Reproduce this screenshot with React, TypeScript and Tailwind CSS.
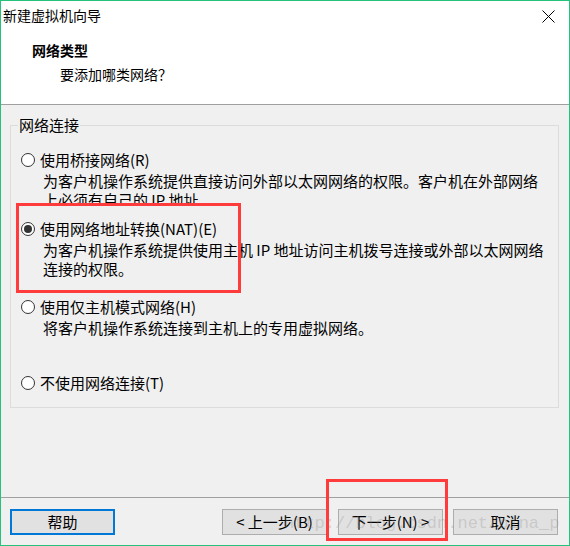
type Option = {
  label: string;
  lines: string[];
  checked?: boolean;
  className: string;
  descClassName?: string;
};

const options: Option[] = [
  {
    label: "使用桥接网络(R)",
    lines: ["为客户机操作系统提供直接访问外部以太网网络的权限。客户机在外部网络", "上必须有自己的 IP 地址。"],
    className: "mt-[15px]",
    descClassName: "h-[32px] overflow-hidden",
  },
  {
    label: "使用网络地址转换(NAT)(E)",
    lines: ["为客户机操作系统提供使用主机 IP 地址访问主机拨号连接或外部以太网网络", "连接的权限。"],
    checked: true,
    className: "mt-[16px]",
  },
  {
    label: "使用仅主机模式网络(H)",
    lines: ["将客户机操作系统连接到主机上的专用虚拟网络。"],
    className: "mt-[19px]",
  },
  {
    label: "不使用网络连接(T)",
    lines: [],
    className: "mt-[36px]",
  },
];

function Radio({ checked }: { checked?: boolean }) {
  return (
    <span className="flex h-[14px] w-[14px] shrink-0 items-center justify-center rounded-full border border-[#333333] bg-white">
      {checked && <span className="h-[8px] w-[8px] rounded-full bg-[#333333]" />}
    </span>
  );
}

function Button({ children, focused }: { children: React.ReactNode; focused?: boolean }) {
  return (
    <div
      className={
        focused
          ? "flex h-[26px] w-[105px] items-center justify-center border-2 border-[#0078d7] bg-[#e1e1e1] text-[15px] leading-[20px]"
          : "flex h-[26px] w-[105px] items-center justify-center border border-[#adadad] bg-[#e1e1e1] text-[15px] leading-[20px]"
      }
    >
      {children}
    </div>
  );
}

export default function App() {
  return (
    <div className="relative flex h-[546px] w-[570px] flex-col overflow-hidden border border-[#25c27a] bg-[#f0f0f0] font-['Noto_Sans_CJK_SC',sans-serif] text-black">
      <header className="h-[104px] shrink-0 border-b border-[#a0a0a0] bg-white">
        <div className="flex items-center justify-between pl-[2px] pr-[14px] pt-[4px]">
          <span className="text-[14px] leading-[20px]">新建虚拟机向导</span>
          <svg width="13" height="13" viewBox="0 0 13 13" className="mt-[2px]">
            <path d="M0.5 0.5 L12.5 12.5 M12.5 0.5 L0.5 12.5" stroke="#000" strokeWidth="1" />
          </svg>
        </div>
        <div className="mt-[15px] pl-[31px] text-[14px] font-bold leading-[20px]">网络类型</div>
        <div className="mt-[4px] pl-[59px] text-[14px] leading-[20px]">要添加哪类网络？</div>
      </header>

      <div className="flex flex-1 flex-col">
        <fieldset className="ml-[9px] mr-[10px] mt-[10px] border border-[#dcdcdc] pb-[14px]">
          <legend className="ml-[7px] px-[1px] text-[15px] leading-[20px]">网络连接</legend>
          {options.map((opt) => (
            <div key={opt.label} className={opt.className}>
              <div className="flex h-[20px] items-center pl-[10px]">
                <Radio checked={opt.checked} />
                <span className="ml-[5px] text-[15px] leading-[20px]">{opt.label}</span>
              </div>
              {opt.lines.length > 0 && (
                <div className={`mt-[1px] pl-[32px] text-[15px] leading-[19px] ${opt.descClassName ?? ""}`}>
                  {opt.lines.map((line) => (
                    <div key={line} className="whitespace-nowrap">
                      {line}
                    </div>
                  ))}
                </div>
              )}
            </div>
          ))}
        </fieldset>

        <footer className="mt-auto flex border-t border-[#a0a0a0] pb-[10px] pl-[9px] pr-[11px] pt-[11px]">
          <Button focused>帮助</Button>
          <div className="flex-1" />
          <Button>&lt; 上一步(B)</Button>
          <div className="ml-[11px]">
            <Button>下一步(N) &gt;</Button>
          </div>
          <div className="ml-[10px]">
            <Button>取消</Button>
          </div>
        </footer>
      </div>

      {/* annotations over the dialog */}
      <div className="pointer-events-none absolute left-[283px] top-[513px] whitespace-nowrap font-['Liberation_Mono',monospace] text-[17px] leading-[20px] text-[#8c8c8c]/30">
        http://blog.csdn.net/bina_p
      </div>
      <div className="pointer-events-none absolute left-[15px] top-[202px] h-[90px] w-[225px] border-[3px] border-[#ff3b3b]" />
      <div className="pointer-events-none absolute left-[325px] top-[478px] h-[62px] w-[122px] border-[3px] border-[#ff3b3b]" />
    </div>
  );
}
